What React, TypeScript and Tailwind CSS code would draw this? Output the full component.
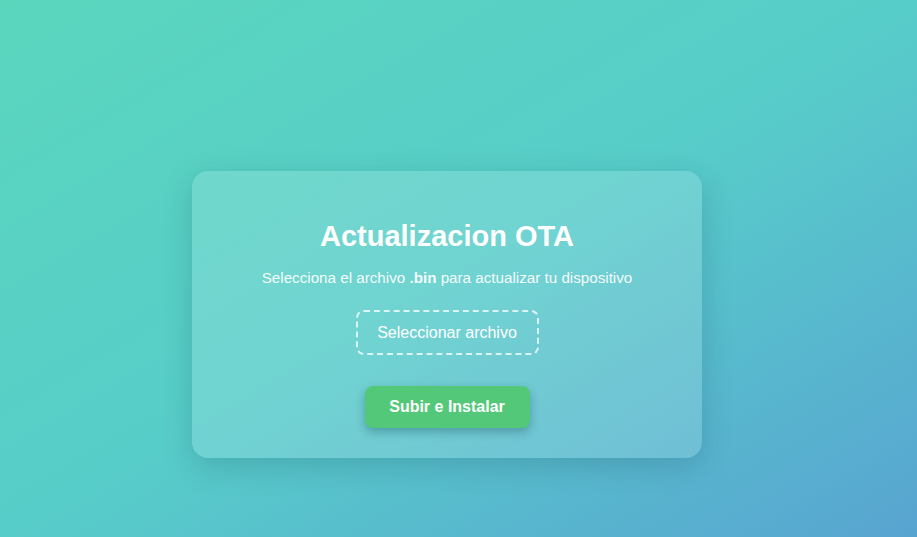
export default function App() {
  return (
    <div
      className="min-h-screen w-full bg-gradient-to-br from-[#5ad6bd] via-[#57cdc9] to-[#58a4d1] pl-[192px] pt-[171px]"
      style={{ fontFamily: '"Liberation Sans", Arial, sans-serif' }}
    >
      <div className="flex h-[287px] w-[510px] flex-col items-center rounded-2xl bg-white/15 pt-[48px] text-white shadow-[0_8px_30px_rgba(0,40,60,0.18)]">
        <h1 className="text-[29px] font-bold leading-[34px]">Actualizacion OTA</h1>
        <p className="mt-[14px] text-[15.2px] leading-[22px] text-white/95">
          Selecciona el archivo <span className="font-bold">.bin</span> para actualizar tu dispositivo
        </p>
        <label className="mt-[21px] flex h-[45px] w-[183px] cursor-pointer items-center justify-center rounded-lg border-2 border-dashed border-white/75 text-[16px] text-white">
          Seleccionar archivo
          <input type="file" accept=".bin" className="hidden" />
        </label>
        <button className="mt-[31px] flex h-[42px] w-[165px] items-center justify-center rounded-lg bg-[#52c878] text-[16px] font-bold text-white shadow-[0_4px_10px_rgba(0,50,60,0.3)]">
          Subir e Instalar
        </button>
      </div>
    </div>
  );
}
